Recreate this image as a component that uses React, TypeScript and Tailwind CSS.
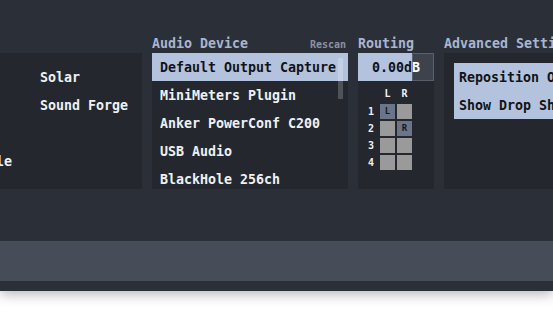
const mono = "font-['DejaVu_Sans_Mono','Liberation_Mono',monospace]"

const devices = [
  'Default Output Capture',
  'MiniMeters Plugin',
  'Anker PowerConf C200',
  'USB Audio',
  'BlackHole 256ch',
  'Microphone',
]

function PanelTitle({ children, right }: { children?: React.ReactNode; right?: React.ReactNode }) {
  return (
    <div className="h-[18px] flex items-start justify-between">
      <span className="text-[13.3px] leading-[17px] text-[#a8b6d0] font-bold">{children}</span>
      {right}
    </div>
  )
}

function Cell({ label }: { label?: string }) {
  return (
    <div
      className={`w-[15px] h-[15px] flex items-center justify-center text-[9px] font-bold text-[#15171c] ${
        label ? 'bg-[#6a7589]' : 'bg-[#9a9a9a]'
      }`}
    >
      {label}
    </div>
  )
}

export default function App() {
  return (
    <div className={`w-[553px] h-[318px] bg-white overflow-hidden ${mono}`}>
      <div className="h-[291px] bg-[#2b2f38] flex flex-col shadow-[0_3px_12px_rgba(0,0,0,0.3)]">
        <div className="flex gap-[10px] pt-[35px] ml-[-50px]">
          {/* Sources */}
          <div className="w-[192px] flex flex-col shrink-0">
            <PanelTitle />
            <div className="h-[136px] bg-[#24272e] flex pt-[11px] text-[13.3px] font-bold text-[#eef0f3]">
              <div className="w-[90px] pl-[14px] flex flex-col">
                <div className="h-[28px]" />
                <div className="h-[28px]" />
                <div className="h-[28px]" />
                <div className="h-[28px] flex items-center">Simple</div>
              </div>
              <div className="flex flex-col">
                <div className="h-[28px] flex items-center">Solar</div>
                <div className="h-[28px] flex items-center">Sound Forge</div>
              </div>
            </div>
          </div>

          {/* Audio device */}
          <div className="w-[196px] flex flex-col shrink-0">
            <PanelTitle right={<span className="text-[10px] leading-[19px] pr-[2px] text-[#8a93a3] font-bold">Rescan</span>}>
              Audio Device
            </PanelTitle>
            <div className="relative h-[136px] bg-[#24272e] overflow-hidden text-[13.3px] font-bold">
              {devices.map((d, i) => (
                <div
                  key={d}
                  className={`h-[28px] flex items-center pl-[8px] pt-[2px] ${
                    i === 0 ? 'bg-[#b3c3de] text-[#111318]' : 'text-[#eef0f3]'
                  }`}
                >
                  {d}
                </div>
              ))}
              <div className="absolute left-[186px] top-[5px] w-[5px] h-[41px] bg-white/20" />
            </div>
          </div>

          {/* Routing */}
          <div className="w-[76px] flex flex-col shrink-0">
            <PanelTitle>Routing</PanelTitle>
            <div className="h-[136px] bg-[#24272e] flex flex-col">
              <div className="relative h-[28px] flex">
                <div className="w-[54px] bg-[#b3c3de]" />
                <div className="flex-1 bg-[#3d424d] border border-[#5a5f6a]" />
                <div className="absolute inset-0 pt-[2px] flex items-center justify-center text-[13.3px] font-bold text-[#111318]">
                  0.00d<span className="text-white">B</span>
                </div>
              </div>
              <div className="ml-[10px] mt-[7px] flex flex-col gap-[2px]">
                <div className="flex gap-[2px] h-[12px] mb-[2px] text-[10px] font-bold text-[#eef0f3]">
                  <div className="w-[10px]" />
                  <div className="w-[15px] text-center leading-[12px]">L</div>
                  <div className="w-[15px] text-center leading-[12px]">R</div>
                </div>
                {[1, 2, 3, 4].map((n) => (
                  <div key={n} className="flex gap-[2px]">
                    <div className="w-[10px] text-[10px] leading-[15px] font-bold text-[#eef0f3]">{n}</div>
                    <Cell label={n === 1 ? 'L' : undefined} />
                    <Cell label={n === 2 ? 'R' : undefined} />
                  </div>
                ))}
              </div>
            </div>
          </div>

          {/* Advanced */}
          <div className="w-[200px] flex flex-col shrink-0">
            <PanelTitle>
              <span className="whitespace-nowrap">Advanced Settings</span>
            </PanelTitle>
            <div className="h-[136px] bg-[#24272e] p-[10px] pr-0">
              <div className="bg-[#b3c3de] text-[#111318] text-[13.3px] font-bold whitespace-nowrap">
                <div className="h-[28px] flex items-center pl-[5px] pt-[2px]">Reposition On Open</div>
                <div className="h-[28px] flex items-center pl-[5px] pt-[2px]">Show Drop Shadow</div>
              </div>
            </div>
          </div>
        </div>

        <div className="flex-1" />
        <div className="h-[40px] bg-[#464c58]" />
        <div className="h-[10px]" />
      </div>
    </div>
  )
}
